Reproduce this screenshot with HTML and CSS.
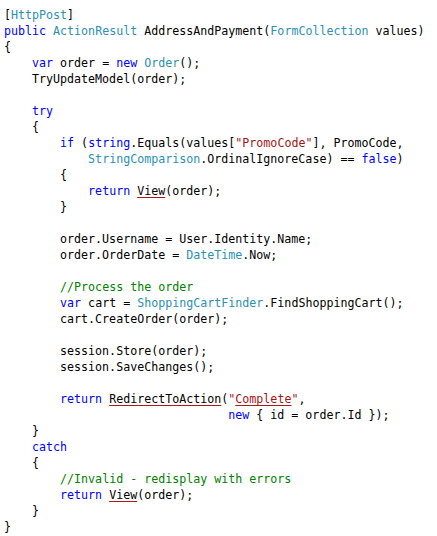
FILE: index.html
```html
<!DOCTYPE html>
<html>
<head>
<meta charset="utf-8">
<link rel="stylesheet" href="styles.css">
</head>
<body>
<pre class="code">[<span class="t">HttpPost</span>]
<span class="k">public</span> <span class="t">ActionResult</span> AddressAndPayment(<span class="t">FormCollection</span> values)
{
    <span class="k">var</span> order = <span class="k">new</span> <span class="t">Order</span>();
    TryUpdateModel(order);

    <span class="k">try</span>
    {
        <span class="k">if</span> (<span class="k">string</span>.Equals(values[<span class="s">"PromoCode"</span>], PromoCode,
            <span class="t">StringComparison</span>.OrdinalIgnoreCase) == <span class="k">false</span>)
        {
            <span class="k">return</span> <span class="u">View</span>(order);
        }

        order.Username = User.Identity.Name;
        order.OrderDate = <span class="t">DateTime</span>.Now;

        <span class="c">//Process the order</span>
        <span class="k">var</span> cart = <span class="t">ShoppingCartFinder</span>.FindShoppingCart();
        cart.CreateOrder(order);

        session.Store(order);
        session.SaveChanges();

        <span class="k">return</span> <span class="u">RedirectToAction</span>(<span class="s">"<span class="u">Complete</span>"</span>,
                                <span class="k">new</span> { id = order.Id });
    }
    <span class="k">catch</span>
    {
        <span class="c">//Invalid - redisplay with errors</span>
        <span class="k">return</span> <span class="u">View</span>(order);
    }
}</pre>
</body>
</html>
```
FILE: styles.css
```css
html, body {
  margin: 0;
  background: #ffffff;
}
body {
  padding: 7px 0 0 4px;
}
.code {
  margin: 0;
  font-family: "DejaVu Sans Mono", "Liberation Mono", monospace;
  font-size: 11.65px;
  line-height: 16px;
  color: #000000;
}
.k { color: #0000ff; }
.t { color: #2b91af; }
.s { color: #a31515; }
.c { color: #008000; }
.u {
  text-decoration: underline;
  text-decoration-color: #b01818;
  text-decoration-thickness: 1px;
  text-underline-offset: 2px;
}
```
